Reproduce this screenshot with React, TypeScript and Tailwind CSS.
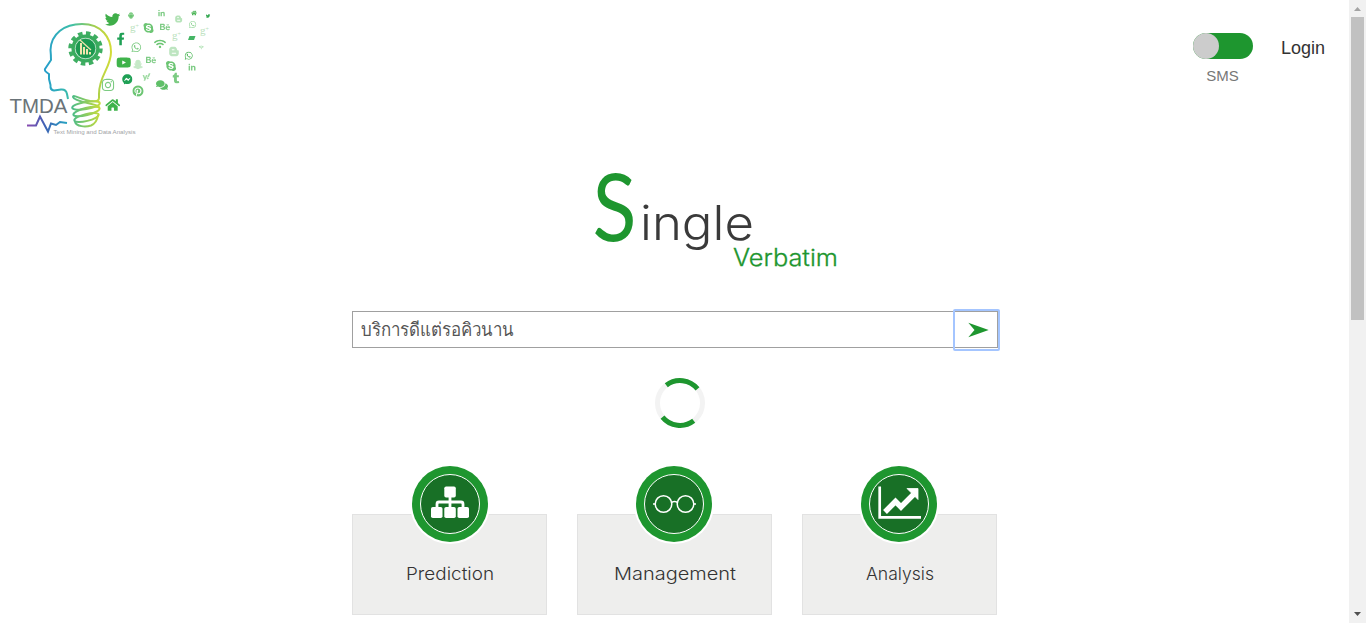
import React from "react";
import { AiFillAndroid } from "react-icons/ai";
import {
  FaTwitter, FaLinkedinIn, FaBloggerB, FaHome, FaSkype, FaBehance, FaWhatsapp,
  FaWifi, FaSnapchatGhost, FaYoutube, FaFacebookMessenger, FaYahoo, FaComments, FaPinterest,
  FaTumblr, FaInstagram, FaFacebookF,
} from "react-icons/fa";

type Mark = [React.ComponentType<any>, number, number, number, string];

// icon, centre x, centre y, size, colour
const marks: Mark[] = [
  [FaTwitter, 112.5, 19.5, 15.5, "#3fae49"],
  [AiFillAndroid, 131, 15.5, 8, "#6cc573"],
  [FaLinkedinIn, 161.5, 13.5, 7.5, "#7fcc86"],
  [FaBloggerB, 178.7, 19, 8, "#b5e3b8"],
  [FaHome, 194, 13, 6, "#4cb556"],
  [FaTwitter, 208, 16, 4.5, "#35a852"],
  [FaSkype, 148.5, 28, 11.5, "#6cc573"],
  [FaBehance, 165, 27, 10, "#7fcc86"],
  [FaWhatsapp, 192.7, 24.5, 8, "#8dd492"],
  [FaFacebookF, 120.7, 39, 13, "#1fa055"],
  [FaWhatsapp, 136.3, 47.3, 11, "#7ccb82"],
  [FaWifi, 160, 44, 12, "#6cc573"],
  [FaBloggerB, 174, 51.5, 11, "#bde5c0"],
  [FaWhatsapp, 188.7, 55.7, 9, "#45b350"],
  [FaWifi, 201.3, 47.5, 5, "#8dd492"],
  [FaYoutube, 123.7, 62.5, 15, "#3fb34b"],
  [FaSnapchatGhost, 138, 64.5, 10, "#c6e9c8"],
  [FaBehance, 151, 60, 10, "#7fcc86"],
  [FaSkype, 171, 66, 11.5, "#6cc573"],
  [FaLinkedinIn, 192, 67.5, 8, "#7fcc86"],
  [FaFacebookMessenger, 127.3, 79.3, 10.5, "#1fa055"],
  [FaYahoo, 146.5, 77, 8.5, "#a0dba4"],
  [FaComments, 162, 85, 12, "#5fbf68"],
  [FaTumblr, 176, 78, 11, "#7ccb82"],
  [FaInstagram, 108, 85, 14, "#7ccb82"],
  [FaPinterest, 138, 91, 11.5, "#6cc573"],
  [FaHome, 112.7, 105, 15, "#3fb34b"],
];

function Logo() {
  return (
    <svg width="220" height="145" viewBox="0 0 220 145" className="shrink-0" fill="none">
      <defs>
        <linearGradient id="head" gradientUnits="userSpaceOnUse" x1="44" y1="0" x2="112" y2="0">
          <stop offset="0" stopColor="#249ccc" />
          <stop offset=".4" stopColor="#3dbfa8" />
          <stop offset=".75" stopColor="#a5ce4c" />
          <stop offset="1" stopColor="#d5dc36" />
        </linearGradient>
        <linearGradient id="pulse" gradientUnits="userSpaceOnUse" x1="27" y1="0" x2="68" y2="0">
          <stop offset="0" stopColor="#8a4bb0" />
          <stop offset=".45" stopColor="#3d63b5" />
          <stop offset="1" stopColor="#25a7c3" />
        </linearGradient>
        <linearGradient id="coil" gradientUnits="userSpaceOnUse" x1="70" y1="0" x2="101" y2="0">
          <stop offset="0" stopColor="#43b98d" />
          <stop offset="1" stopColor="#c9dc3a" />
        </linearGradient>
      </defs>
      <path
        d="M68 99 L67 94 Q66 89 61 89.500 L54 90.500 Q50 90 50.500 85 L49 79 L49 74 Q44 71 45 69 L51 60 Q51 55 50.500 50 C51 34 64 24 82 24 C102 24 111 38 111 52 C111 68 99 75 99 94 L99 98"
        stroke="url(#head)" strokeWidth="2" strokeLinejoin="round"
      />
      <g stroke="url(#coil)" strokeWidth="2">
        <path d="M99 98C99 101 96 102 90 101C80 99 73 94 73 97C74 102 98 104 99 107" />
        <ellipse cx="86" cy="105.500" rx="14" ry="3.600" transform="rotate(-10 86 105.500)" />
        <ellipse cx="86.500" cy="111.500" rx="13.500" ry="3.600" transform="rotate(-14 86.500 111.500)" />
        <ellipse cx="86.500" cy="117.500" rx="12.500" ry="3.500" transform="rotate(-14 86.500 117.500)" />
        <path d="M75 121.500C76 127 86 127 91 125.500Q97 123 98 115" />
      </g>
      <path d="M27 125.500 H36 L40 116.500 L48 131.500 L51 123.500 L56 125 L60 122 L67 123" stroke="url(#pulse)" strokeWidth="2" />
      <circle cx="85.500" cy="48.500" r="15.300" stroke="#3fae62" strokeWidth="3.800" strokeDasharray="4.5 3.510" />
      <circle cx="85.500" cy="48.500" r="12.300" stroke="#3aab5e" strokeWidth="3.500" />
      <circle cx="85.500" cy="48.500" r="10.300" fill="#1c9950" stroke="#d8efdd" strokeWidth=".6" />
      <path d="M81 54.500V43M84 54.500V47M87 54.500V49M90 54.500V52" stroke="#f2e4ad" strokeWidth="2" />
      <path d="M80 40L91 50" stroke="#f2e4ad" strokeWidth="1.200" />
      {marks.map(([Icon, x, y, size, color], i) => (
        <Icon key={i} x={x - size / 2} y={y - size / 2} size={size} color={color} />
      ))}
      <path d="M189.500 36h6l-1.500 4h-6z" fill="#45b565" />
      <g fill="#b9e1bc" fontFamily="Liberation Serif, serif">
        <text x="130" y="31" fontSize="11">g<tspan dy="-3" fontSize="6">+</tspan></text>
        <text x="172" y="39" fontSize="11">g<tspan dy="-3" fontSize="6">+</tspan></text>
        <text x="200" y="34" fontSize="11">g<tspan dy="-3" fontSize="6">+</tspan></text>
      </g>
      <text x="9.500" y="113" fontSize="19.500" textLength="58" lengthAdjust="spacingAndGlyphs" fill="#6a7378" fontFamily="Liberation Sans, sans-serif">TMDA</text>
      <text x="53.500" y="133.500" fontSize="5.800" textLength="82" lengthAdjust="spacingAndGlyphs" fill="#a0a3a5" fontFamily="Liberation Sans, sans-serif">Text Mining and Data Analysis</text>
    </svg>
  );
}

function SitemapIcon() {
  return (
    <svg width="76" height="76" viewBox="0 0 76 76" fill="white">
      <rect x="32.300" y="20.500" width="11.500" height="11" rx="1.800" />
      <rect x="19" y="41" width="11.500" height="11" rx="1.800" />
      <rect x="32.300" y="41" width="11.500" height="11" rx="1.800" />
      <rect x="45.500" y="41" width="11.500" height="11" rx="1.800" />
      <path d="M38 30V42M25 42V38Q25 36 27 36H49Q51 36 51 38V42" fill="none" stroke="white" strokeWidth="2.800" />
    </svg>
  );
}

function GlassesIcon() {
  return (
    <svg width="76" height="76" viewBox="0 0 76 76" fill="none" stroke="white" strokeWidth="1.500">
      <circle cx="27.500" cy="38" r="8.300" />
      <circle cx="49.500" cy="38" r="8.300" />
      <path d="M35.500 37Q36 35.500 38.500 35.500T41.500 37M19 38H17M58 38H60" />
    </svg>
  );
}

function ChartIcon() {
  return (
    <svg width="76" height="76" viewBox="0 0 76 76" fill="none" stroke="white">
      <path d="M18.700 20.500V51.300H60" strokeWidth="2.700" />
      <path d="M24 46L34.500 35.500L40 41L52.500 28.500" strokeWidth="5.500" />
      <path d="M46 22.500H57V33.500Z" fill="white" stroke="white" strokeLinejoin="round" strokeWidth=".8" />
    </svg>
  );
}

const cards = [
  { label: "Prediction", Icon: SitemapIcon, width: 88, nudge: "" },
  { label: "Management", Icon: GlassesIcon, width: 122, nudge: "mr-0.5" },
  { label: "Analysis", Icon: ChartIcon, width: 68, nudge: "mr-0.5" },
];

const gothic = "'Century Gothic', Inter, sans-serif";

function Word({ text, width, height, baseline, size, color, weight = 400, x = 0, stroke = 0, family = gothic }: {
  text: string; width: number; height: number; baseline: number; size: number; color: string; weight?: number; x?: number; stroke?: number; family?: string;
}) {
  return (
    <svg width={width} height={height} className="block shrink-0 overflow-visible">
      <text x={x} y={baseline} fontFamily={family} fontSize={size} fontWeight={weight} fill={color} stroke={stroke ? color : "none"} strokeWidth={stroke} textLength={width} lengthAdjust="spacingAndGlyphs">{text}</text>
    </svg>
  );
}

export default function App() {
  return (
    <div className="flex h-[623px] w-full overflow-hidden bg-white font-['Liberation_Sans',sans-serif]">
      <main className="flex min-w-0 flex-1 flex-col">
        <header className="flex h-[145px] items-start justify-between">
          <Logo />
          <div className="flex pt-[33px] pr-6">
            <div className="flex w-[60px] flex-col items-center">
              <button className="h-[26px] w-[60px] rounded-full bg-[#1e962f]" aria-label="SMS">
                <span className="block size-[26px] rounded-full bg-[#ccc]" />
              </button>
              <span className="mt-[7px] mr-px text-[15px] leading-5 text-[#777]">SMS</span>
            </div>
            <a className="ml-7 pt-[3px] text-lg leading-6 text-[#333]">Login</a>
          </div>
        </header>

        <h1 className="ml-[595px] flex h-[130px] w-[243px] flex-col">
          <div className="flex h-[98px]">
            <Word text="S" width={44} height={98} baseline={96} size={94} x={-2.5} color="#1e962f" family="'Century Gothic', Lato, sans-serif" />
            <span className="ml-px"><Word text="ingle" width={114} height={98} baseline={95} size={47.5} color="#3a3a3a" weight={300} /></span>
          </div>
          <div className="ml-[138px] h-8"><Word text="Verbatim" width={105} height={32} baseline={23} size={23.5} color="#1e962f" weight={300} stroke={0.3} /></div>
        </h1>

        <section className="mx-auto w-[645px] pt-9">
          <form className="flex h-[37px] w-[646px] border border-[#a0a0a0]">
            <div className="flex flex-1 items-center pl-2">
              <Word text="บริการดีแต่รอคิวนาน" width={153} height={35} baseline={24} size={18.5} color="#555" weight={300} family="'Noto Sans', sans-serif" />
            </div>
            <button type="button" className="-mt-0.5 -mr-0.5 flex h-10 w-[45px] items-center justify-center rounded-[1px] outline-2 -outline-offset-1 outline-[#a4c5ff]" aria-label="Send">
              <svg width="21" height="16" viewBox="0 0 21 16" className="ml-1"><path d="M.3 .8L20.700 8L.3 15.200L6.500 8Z" fill="#1e962f" /></svg>
            </button>
          </form>
          <div className="flex h-[118px] justify-center pt-[30px] pl-[11px]">
            <svg width="50" height="50" viewBox="0 0 50 50" fill="none" strokeWidth="5">
              <circle cx="25" cy="25" r="22.500" stroke="#f3f3f3" />
              <path d="M11.300 7.200A22.500 22.500 0 0 1 42.500 10.900M38.700 42.800A22.500 22.500 0 0 1 7.500 39.100" stroke="#1e962f" />
            </svg>
          </div>
          <div className="grid grid-cols-3 gap-[30px] pt-12">
            {cards.map(({ label, Icon, width, nudge }) => (
              <article key={label} className="flex h-[101px] flex-col items-center border border-[#e2e2e2] bg-[#eeeeed]">
                <div className={nudge}>
                  <div className="-mt-[51px] size-20 shrink-0 rounded-full bg-white p-0.5">
                    <div className="relative flex size-[76px] items-center justify-center rounded-full bg-[#1e962f]">
                      <span className="absolute inset-2 rounded-full border border-white bg-[#187026]" />
                      <span className="relative"><Icon /></span>
                    </div>
                  </div>
                </div>
                <div className="mt-[18px]"><Word text={label} width={width} height={26} baseline={18} size={17.5} color="#333" weight={300} /></div>
              </article>
            ))}
          </div>
        </section>
      </main>
      <aside className="flex w-[17px] shrink-0 flex-col items-center justify-between bg-[#f1f1f1]">
        <div className="flex flex-col items-center">
          <svg width="17" height="17" viewBox="0 0 17 17"><path d="M5 11L8.500 7L12 11Z" fill="#a3a3a3" /></svg>
          <div className="h-[303px] w-[13px] bg-[#c1c1c1]" />
        </div>
        <svg width="17" height="17" viewBox="0 0 17 17"><path d="M5 6L8.500 10L12 6Z" fill="#505050" /></svg>
      </aside>
    </div>
  );
}
